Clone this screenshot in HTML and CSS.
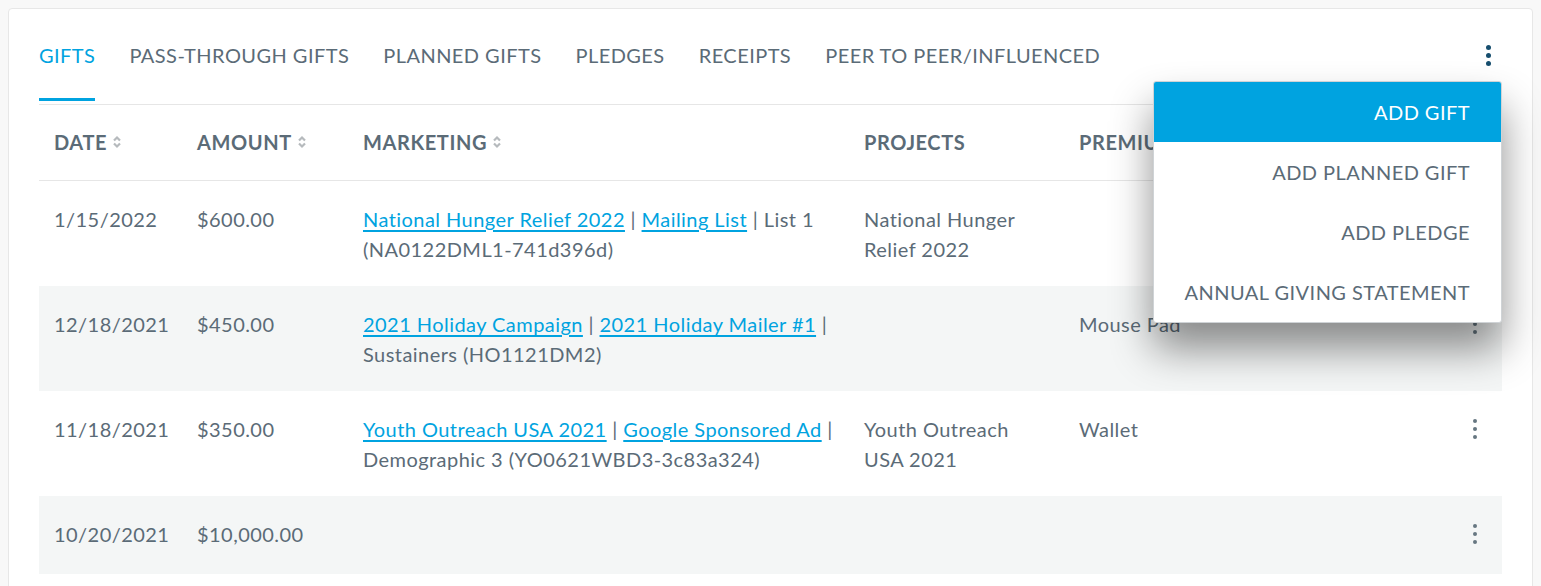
FILE: index.html
```html
<!DOCTYPE html>
<html lang="en">
<head>
<meta charset="utf-8">
<title>Gifts</title>
<link rel="stylesheet" href="styles.css">
</head>
<body>
<div class="card">
  <div class="nav">
    <div class="tabs">
      <a class="tab active">GIFTS</a>
      <a class="tab">PASS-THROUGH GIFTS</a>
      <a class="tab">PLANNED GIFTS</a>
      <a class="tab">PLEDGES</a>
      <a class="tab">RECEIPTS</a>
      <a class="tab">PEER TO PEER/INFLUENCED</a>
    </div>
    <button class="kebab kebab-top" aria-label="More">
      <span></span><span></span><span></span>
    </button>
  </div>

  <table class="grid">
    <colgroup>
      <col class="c-date"><col class="c-amount"><col class="c-mkt"><col class="c-proj"><col><col class="c-act">
    </colgroup>
    <thead>
      <tr>
        <th><span class="th-in">DATE <svg class="sort" viewBox="0 0 10 16"><path d="M2 6.5 L5 3.5 L8 6.5"/><path d="M2 9.5 L5 12.5 L8 9.5"/></svg></span></th>
        <th><span class="th-in">AMOUNT <svg class="sort" viewBox="0 0 10 16"><path d="M2 6.5 L5 3.5 L8 6.5"/><path d="M2 9.5 L5 12.5 L8 9.5"/></svg></span></th>
        <th><span class="th-in">MARKETING <svg class="sort" viewBox="0 0 10 16"><path d="M2 6.5 L5 3.5 L8 6.5"/><path d="M2 9.5 L5 12.5 L8 9.5"/></svg></span></th>
        <th>PROJECTS</th>
        <th>PREMIUM</th>
        <th></th>
      </tr>
    </thead>
    <tbody>
      <tr>
        <td>1/15/2022</td>
        <td>$600.00</td>
        <td><a class="lnk">National Hunger Relief 2022</a> | <a class="lnk">Mailing List</a> | List 1 (NA0122DML1-741d396d)</td>
        <td>National Hunger Relief 2022</td>
        <td></td>
        <td class="act"><button class="kebab" aria-label="Actions"><span></span><span></span><span></span></button></td>
      </tr>
      <tr class="alt">
        <td>12/18/2021</td>
        <td>$450.00</td>
        <td><a class="lnk">2021 Holiday Campaign</a> | <a class="lnk">2021 Holiday Mailer #1</a> | Sustainers (HO1121DM2)</td>
        <td></td>
        <td>Mouse Pad</td>
        <td class="act"><button class="kebab" aria-label="Actions"><span></span><span></span><span></span></button></td>
      </tr>
      <tr>
        <td>11/18/2021</td>
        <td>$350.00</td>
        <td><a class="lnk">Youth Outreach USA 2021</a> | <a class="lnk">Google Sponsored Ad</a> | Demographic 3 (YO0621WBD3-3c83a324)</td>
        <td>Youth Outreach USA 2021</td>
        <td>Wallet</td>
        <td class="act"><button class="kebab" aria-label="Actions"><span></span><span></span><span></span></button></td>
      </tr>
      <tr class="alt">
        <td>10/20/2021</td>
        <td>$10,000.00</td>
        <td></td>
        <td></td>
        <td></td>
        <td class="act"><button class="kebab" aria-label="Actions"><span></span><span></span><span></span></button></td>
      </tr>
    </tbody>
  </table>

  <ul class="menu">
    <li class="menu-item selected">ADD GIFT</li>
    <li class="menu-item">ADD PLANNED GIFT</li>
    <li class="menu-item">ADD PLEDGE</li>
    <li class="menu-item">ANNUAL GIVING STATEMENT</li>
  </ul>
</div>
</body>
</html>
```

FILE: styles.css
```css
html, body {
  margin: 0;
  padding: 0;
}
body {
  background: #f8f8f8;
  padding: 8px;
  font-family: Lato, "Open Sans", Arial, sans-serif;
  font-size: 20px;
  line-height: 30px;
  letter-spacing: 0.45px;
  color: #5b6b77;
}
.card {
  position: relative;
  background: #fff;
  border: 1px solid #e7e7e7;
  border-radius: 4px;
  padding: 31px 30px 30px 30px;
}
.nav {
  display: flex;
  align-items: flex-start;
  justify-content: space-between;
  border-bottom: 1px solid #e6e6e6;
  padding-bottom: 3px;
}
.tabs {
  display: flex;
  gap: 34px;
}
.tab {
  display: block;
  color: #5b6b77;
  text-decoration: none;
  padding-bottom: 28px;
  border-bottom: 3px solid transparent;
}
.tab.active {
  color: #00a3e0;
  border-bottom-color: #00a3e0;
}
.kebab {
  display: flex;
  flex-direction: column;
  align-items: center;
  justify-content: center;
  gap: 4px;
  width: 28px;
  height: 40px;
  padding: 0;
  border: 0;
  background: transparent;
  cursor: pointer;
}
.kebab span {
  display: block;
  width: 4px;
  height: 4px;
  border-radius: 50%;
  background: #667781;
}
.kebab-top {
  width: 28px;
  height: 30px;
  gap: 3px;
}
.kebab-top span {
  background: #164e6e;
  width: 5px;
  height: 5px;
}
.grid {
  width: 100%;
  border-collapse: collapse;
  table-layout: fixed;
}
.c-date { width: 143px; }
.c-amount { width: 166px; }
.c-mkt { width: 501px; }
.c-proj { width: 215px; }
.c-act { width: 54px; }
.grid th {
  text-align: left;
  font-weight: 700;
  letter-spacing: 0.6px;
  color: #5b6b77;
  padding: 22px 15px 23px;
  border-bottom: 1px solid #e6e6e6;
  vertical-align: top;
}
.th-in {
  display: inline-flex;
  align-items: center;
  gap: 5px;
}
.sort {
  width: 10px;
  height: 16px;
  fill: none;
  stroke: #b6babd;
  stroke-width: 2.2;
}
.grid td {
  padding: 23px 15px 22px;
  vertical-align: top;
}
.grid td.act {
  padding: 18px 0 20px;
}
.grid td.act .kebab {
  margin: 0 auto;
}
.grid tr.alt td {
  background: #f4f6f6;
}
.lnk {
  color: #00a3e0;
  text-decoration: underline;
  text-underline-offset: 3px;
  cursor: pointer;
}
.menu {
  position: absolute;
  top: 72px;
  right: 30px;
  width: 347px;
  margin: 0;
  padding: 0;
  list-style: none;
  background: #fff;
  border: 1px solid #cfd3d6;
  border-radius: 3px;
  box-shadow: 0 26px 42px rgba(0, 0, 0, 0.44);
  overflow: hidden;
}
.menu-item {
  height: 60px;
  line-height: 60px;
  text-align: right;
  padding-right: 31px;
  color: #5b6b77;
}
.menu-item.selected {
  background: #00a3e0;
  color: #fff;
}
```
